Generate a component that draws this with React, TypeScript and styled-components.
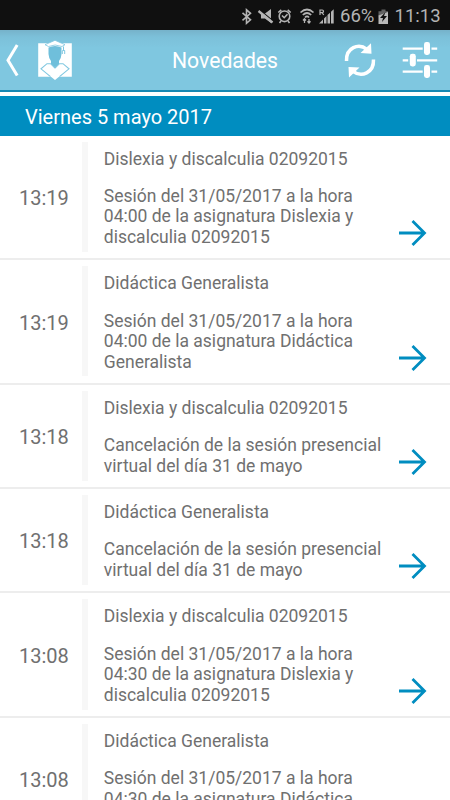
import React from "react";
import styled, { createGlobalStyle } from "styled-components";

const Global = createGlobalStyle`
  * { box-sizing: border-box; }
  html, body { margin: 0; height: 100%; overflow: hidden; background: #fff; }
  body { font-family: Roboto, "Liberation Sans", sans-serif; }
`;

const Screen = styled.div`
  width: 450px;
  height: 800px;
  overflow: hidden;
  display: flex;
  flex-direction: column;
  background: #fff;
`;

const StatusBar = styled.header`
  flex: none;
  height: 30px;
  display: flex;
  align-items: center;
  background: #101010;
  color: #b4b4b4;
  padding: 2px 0 0 241px;
`;

const StatusIcons = styled.svg`
  flex: none;
  width: 97px;
  height: 26px;
`;

const StatusText = styled.span<{ $size: number; $width: number; $gap: number }>`
  flex: none;
  width: ${(p) => p.$width}px;
  margin-left: ${(p) => p.$gap}px;
  font-size: ${(p) => p.$size}px;
  line-height: 26px;
  white-space: nowrap;
`;

const Battery = styled.svg`
  flex: none;
  width: 12px;
  height: 26px;
`;

const AppBar = styled.nav`
  flex: none;
  height: 62px;
  display: grid;
  grid-template-columns: 25px 60px 1fr 60px 60px;
  align-items: center;
  background: linear-gradient(#76b2ca 0, #7cc0d9 7px, #7fc7e0 18px);
  border-bottom: 2px solid #1788b3;
`;

const BarIcon = styled.svg`
  display: block;
  width: 100%;
  height: 60px;
`;

const Title = styled.h1`
  margin: 0;
  padding: 1px 0 0 35px;
  text-align: center;
  color: #fff;
  font-size: 21.2px;
  font-weight: 400;
  white-space: nowrap;
`;

const DateHeader = styled.h2`
  flex: none;
  height: 39.6px;
  margin: 4px 0 0;
  padding-left: 25px;
  background: #008dc0;
  color: #fff;
  font-size: 20px;
  font-weight: 400;
  line-height: 42px;
`;

const List = styled.ul`
  margin: 0;
  padding: 0;
  list-style: none;
`;

const Item = styled.li`
  display: flex;
  border-bottom: 2px solid #ededed;
`;

const Time = styled.time`
  width: 81.5px;
  padding: 2px 0 0 19px;
  align-self: center;
  color: #707070;
  font-size: 20px;
`;

const Divider = styled.span`
  width: 6px;
  margin: 6px 0 6.5px;
  background: #f7f7f7;
`;

const Content = styled.div`
  width: 310px;
  padding: 13px 0 10.9px 16.3px;
  color: #707070;
  font-size: 17.5px;
  line-height: 20.5px;
`;

const Subject = styled.h3`
  margin: 0 0 16.8px;
  font: inherit;
`;

const Message = styled.p`
  margin: 0;
  white-space: pre-line;
`;

const Arrow = styled.svg`
  width: 29px;
  height: 28px;
  align-self: flex-end;
  margin-bottom: 11px;
`;

type News = { time: string; subject: string; message: string };

const dislexia = "Dislexia y discalculia 02092015";
const didactica = "Didáctica Generalista";

const news: News[] = [
  { time: "13:19", subject: dislexia, message: "Sesión del 31/05/2017 a la hora\n04:00 de la asignatura Dislexia y\ndiscalculia 02092015" },
  { time: "13:19", subject: didactica, message: "Sesión del 31/05/2017 a la hora\n04:00 de la asignatura Didáctica\nGeneralista" },
  { time: "13:18", subject: dislexia, message: "Cancelación de la sesión presencial\nvirtual del día 31 de mayo" },
  { time: "13:18", subject: didactica, message: "Cancelación de la sesión presencial\nvirtual del día 31 de mayo" },
  { time: "13:08", subject: dislexia, message: "Sesión del 31/05/2017 a la hora\n04:30 de la asignatura Dislexia y\ndiscalculia 02092015" },
  { time: "13:08", subject: didactica, message: "Sesión del 31/05/2017 a la hora\n04:30 de la asignatura Didáctica\nGeneralista" },
];

function PhoneStatus() {
  return (
    <StatusBar>
      <StatusIcons viewBox="241 2 97 26" fill="none" stroke="#b4b4b4">
        <path d="M242.5 11.8 250.5 18.8 246.5 22.3V8.8L250.5 12.3 242.5 19.3" strokeWidth="1.6" />
        <path d="M261 12.5h4l6-4.5v14l-6-4.5h-4z" fill="#b4b4b4" stroke="none" />
        <path d="M259.7 9 273.5 20.2" stroke="#101010" strokeWidth="1.2" />
        <path d="M258.5 10 272.5 21.5" strokeWidth="2.3" />
        <circle cx="284.5" cy="15.3" r="5.3" strokeWidth="1.6" />
        <path d="M282 14.5 284.2 16.7 287.5 13.2M281 20 279.5 22M288 20 289.5 22M278.3 11.5 281.3 8.8M290.7 11.5 287.7 8.8" strokeWidth="1.6" />
        <path d="M300.5 11.5Q307 5.5 313.5 11.5M302.8 14Q307 10 311.2 14M305 16.5Q307 14.3 309 16.5" strokeWidth="1.7" />
        <path d="M304.5 22v-4M303 19.5l1.5-1.7 1.5 1.7M309 18v4M307.5 20.3l1.5 1.7 1.5-1.7" strokeWidth="1.3" />
        <path d="M320 14V9h2.2a1.3 1.3 0 0 1 0 2.6H320M322 11.6l1.8 2.4" strokeWidth="1.2" />
        <path d="M319 22.5 323 18.5V22.5zM324 22.5V17.5L326.5 15V22.5zM327.5 22.5V14L330 11.7V22.5zM331 22.5V10.7L333.7 8.3V22.5z" fill="#b4b4b4" stroke="none" />
      </StatusIcons>
      <StatusText $size={18.5} $width={37} $gap={2}>66%</StatusText>
      <Battery viewBox="0 0 12 26">
        <path d="M4.5 6.5h4v1.7h2.5v5H1.5v-5h3z" fill="#626262" />
        <path d="M1.5 12.5 11 9V21H1.5z" fill="#b9b9b9" />
        <path d="m8.5 9-5.5 6h3l-1 4 5-6H7z" fill="#101010" />
      </Battery>
      <StatusText $size={18.5} $width={52} $gap={5.5}>11:13</StatusText>
    </StatusBar>
  );
}

function Toolbar() {
  return (
    <AppBar>
      <BarIcon viewBox="0 30 25 60" fill="none" stroke="#fff" strokeWidth="3">
        <path d="M17.2 45 8 60.2 17.2 75.5" />
      </BarIcon>
      <BarIcon viewBox="25 30 60 60">
        <path d="M38.2 43.3H71.8V76.8H38.2z" fill="#fff" />
        <path d="M48.5 47.5Q55 44.5 61.5 47.5V54Q61.3 58 59 61V64.2L55 67.5 51 64.2V61Q48.7 58 48.5 54z" fill="#6fbfdb" />
        <path d="M45 44.7 55 40.3 65 44.7 62 46.5Q55 43.5 48.5 46.5z" fill="#fff" stroke="#7fc7e0" strokeWidth=".8" />
        <path d="M46 64 50.3 63.6 55 68 59.7 63.6 64 64 69 68.8 55 80 41 68.8z" fill="#fff" />
        <path d="M55 68 50.5 63.7H47L41 68.8 50.5 76.7M55 68 59.5 63.7H63L69 68.8 59.5 76.7" fill="none" stroke="#7fc7e0" strokeWidth="1.1" />
        <path d="M63.5 46.5V50M62.3 50.5h2.4v3.5M62.3 51v3" fill="none" stroke="#7fc7e0" strokeWidth="1" />
      </BarIcon>
      <Title>Novedades</Title>
      <BarIcon viewBox="330 30 60 60" fill="none" stroke="#fff" strokeWidth="3.5">
        <path d="M346.5 61C346 47.5 358.5 42.8 367 49.3M373.5 59.5C374 73 361.5 77.6 353 71.3" />
        <path d="M371 43.3 371.5 53.8 360.5 53zM349 77.5 348.5 67 359.5 67.6z" fill="#fff" stroke="none" />
      </BarIcon>
      <BarIcon viewBox="390 30 60 60" fill="#fff">
        <path d="M402.7 47.5h20v2.2h-20zM431.5 47.5h5.7v2.2h-5.7zM402.7 59.2h5.5v2.2h-5.5zM417 59.2h20.2v2.2H417zM402.7 70.5h20v2.2h-20zM431.5 70.5h5.7v2.2h-5.7z" />
        <rect x="424" y="42" width="6" height="13" rx="2.4" />
        <rect x="409.8" y="53.8" width="6" height="12.7" rx="2.4" />
        <rect x="424" y="65" width="6" height="13" rx="2.4" />
      </BarIcon>
    </AppBar>
  );
}

export default function App() {
  return (
    <Screen>
      <Global />
      <PhoneStatus />
      <Toolbar />
      <DateHeader>Viernes 5 mayo 2017</DateHeader>
      <List>
        {news.map((n, i) => (
          <Item key={i}>
            <Time>{n.time}</Time>
            <Divider />
            <Content>
              <Subject>{n.subject}</Subject>
              <Message>{n.message}</Message>
            </Content>
            <Arrow viewBox="398 219 29 28" fill="none" stroke="#008dc0" strokeWidth="2.8">
              <path d="M399 233H425M412.5 221 424.5 233 412.5 245" />
            </Arrow>
          </Item>
        ))}
      </List>
    </Screen>
  );
}
